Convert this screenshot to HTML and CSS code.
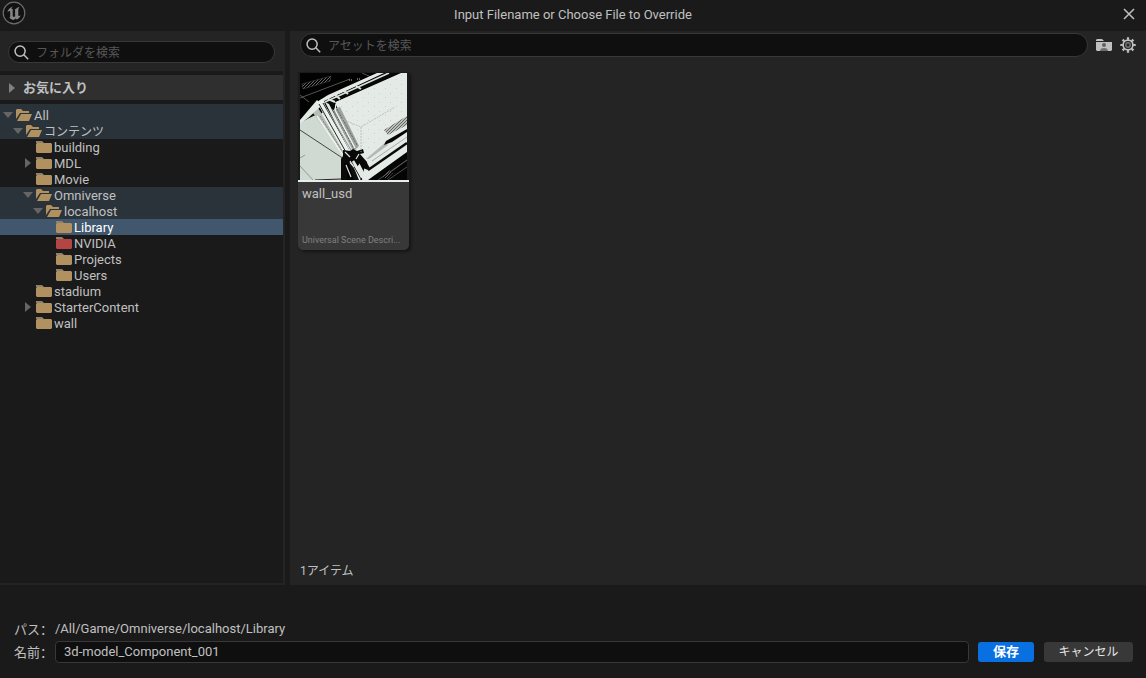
FILE: index.html
```html
<!DOCTYPE html>
<html lang="ja">
<head>
<meta charset="utf-8">
<title>Input Filename or Choose File to Override</title>
<link rel="stylesheet" href="styles.css">
</head>
<body>
<svg class="defs" width="0" height="0" aria-hidden="true">
  <symbol id="folder" viewBox="0 0 16 12"><path fill="#8f816a" d="M0 0h6l2 2H0z"/><path fill="currentColor" d="M1 2h14l1 1v8l-1 1H1l-1-1V3z"/></symbol>
  <symbol id="folder-open" viewBox="0 0 16 12"><path fill="currentColor" d="M0 1l1-1h4l2 2h6v2H4L0 10zM5 5h11l-3 7H1z"/></symbol>
  <symbol id="down" viewBox="0 0 10 10"><path fill="currentColor" d="M0 2h10L5 8z"/></symbol>
  <symbol id="right" viewBox="0 0 10 10"><path fill="currentColor" d="M2 0l6 5-6 5z"/></symbol>
  <symbol id="search" viewBox="0 0 16 16"><g fill="none" stroke="currentColor" stroke-width="1.6"><circle cx="6.5" cy="6.5" r="5.4"/><path d="M10.5 10.5l4.6 4.6"/></g></symbol>
</svg>

<header class="titlebar">
  <svg class="logo" viewBox="0 0 24 24" aria-hidden="true">
    <circle cx="12" cy="12" r="10.8" fill="#111" stroke="#6c6c6c" stroke-width="1.2"/>
    <path fill="#858585" d="M11 5.500C8 6.500 5.800 8.800 5.300 11.600c.8-1 1.600-1.500 2.200-1.500.5 0 .7.3.7.9v4.600c0 .7-.3 1-1 .9 1.200 1.500 2.800 2.300 4.700 2.400l1.400-1.300 1.500 1c2-1.100 3.300-2.600 4-4.700-.8.8-1.400 1.200-1.900 1.200-.4 0-.6-.3-.6-.8V8.700c0-1.100.5-2.100 1.400-3-1.800.5-3.200 1.300-4.100 2.500-.3-.3-.7-.5-1.200-.5.5.5.7 1 .7 1.600v5.900l-1 .8c-.9-.1-1.400-.6-1.400-1.500V8.300c0-.4-.3-.6-.7-.6-.3 0-.6.1-.9.3.4-1 1-1.800 1.900-2.500z"/>
  </svg>
  <h1>Input Filename or Choose File to Override</h1>
  <button class="icon-button close" aria-label="Close"><svg width="12" height="12" viewBox="0 0 12 12"><path d="M1 1l10 10M11 1L1 11" stroke="currentColor" stroke-width="1.5"/></svg></button>
</header>

<main>
  <aside class="sources">
    <div class="source-search">
      <label class="search">
        <svg class="search-icon"><use href="#search"/></svg>
        <input type="text" placeholder="フォルダを検索" aria-label="フォルダを検索">
      </label>
    </div>
    <button class="favorites"><svg class="arrow"><use href="#right"/></svg>お気に入り</button>
    <ul class="tree">
      <li><button class="row path l0"><svg class="arrow"><use href="#down"/></svg><svg class="folder"><use href="#folder-open"/></svg>All</button></li>
      <li><button class="row path ja l1"><svg class="arrow"><use href="#down"/></svg><svg class="folder"><use href="#folder-open"/></svg>コンテンツ</button></li>
      <li><button class="row l2"><span class="arrow"></span><svg class="folder"><use href="#folder"/></svg>building</button></li>
      <li><button class="row l2"><svg class="arrow"><use href="#right"/></svg><svg class="folder"><use href="#folder"/></svg>MDL</button></li>
      <li><button class="row l2"><span class="arrow"></span><svg class="folder"><use href="#folder"/></svg>Movie</button></li>
      <li><button class="row path l2"><svg class="arrow"><use href="#down"/></svg><svg class="folder"><use href="#folder-open"/></svg>Omniverse</button></li>
      <li><button class="row path l3"><svg class="arrow"><use href="#down"/></svg><svg class="folder"><use href="#folder-open"/></svg>localhost</button></li>
      <li><button class="row selected l4"><span class="arrow"></span><svg class="folder"><use href="#folder"/></svg>Library</button></li>
      <li><button class="row l4"><span class="arrow"></span><svg class="folder red"><use href="#folder"/></svg>NVIDIA</button></li>
      <li><button class="row l4"><span class="arrow"></span><svg class="folder"><use href="#folder"/></svg>Projects</button></li>
      <li><button class="row l4"><span class="arrow"></span><svg class="folder"><use href="#folder"/></svg>Users</button></li>
      <li><button class="row l2"><span class="arrow"></span><svg class="folder"><use href="#folder"/></svg>stadium</button></li>
      <li><button class="row l2"><svg class="arrow"><use href="#right"/></svg><svg class="folder"><use href="#folder"/></svg>StarterContent</button></li>
      <li><button class="row l2"><span class="arrow"></span><svg class="folder"><use href="#folder"/></svg>wall</button></li>
    </ul>
  </aside>

  <section class="assets">
    <div class="asset-bar">
      <label class="search tall">
        <svg class="search-icon"><use href="#search"/></svg>
        <input type="text" placeholder="アセットを検索" aria-label="アセットを検索">
      </label>
      <button class="icon-button" aria-label="Developer folders"><svg width="16" height="16" viewBox="0 0 16 16"><path fill="#c0c0c0" d="M0 3l1-1h5l2 2H0zM0 5h16v8l-1 1H1l-1-1z"/><circle cx="8" cy="8" r="2" fill="#606060"/><path fill="#707070" d="M4 14c0-2 1.500-3 4-3s4 1 4 3z"/></svg></button>
      <button class="icon-button" aria-label="Settings"><svg width="16" height="16" viewBox="0 0 16 16"><g fill="none" stroke="#c0c0c0"><circle cx="8" cy="8" r="4.900" stroke-width="1.700"/><circle cx="8" cy="8" r="2.200" stroke="#777" stroke-width="1.400"/><path stroke-width="2.200" d="M8 .3v2.500M8 13.200v2.500M.3 8h2.500M13.200 8h2.500M2.600 2.600l1.700 1.700M11.700 11.700l1.700 1.700M13.400 2.600l-1.700 1.700M4.300 11.700l-1.700 1.700"/></g></svg></button>
    </div>
    <div class="grid">
      <article class="card">
        <svg class="thumb" viewBox="0 0 107 107" role="img" aria-label="wall_usd">
          <defs>
            <pattern id="hatch" width="3" height="3" patternUnits="userSpaceOnUse"><path d="M0 0h1v1H0zM2 1h1v1H2zM1 2h1v1H1z" fill="#666"/></pattern>
            <pattern id="specks" width="11" height="9" patternUnits="userSpaceOnUse"><path d="M2 2h1v1H2zM8 6h1v1H8z" fill="#cbd2cc"/></pattern>
          </defs>
          <path d="M0 0h107v107H0z" fill="#020202"/>
          <path d="M2 11L31 3l-1 5L3 16z" fill="url(#hatch)" stroke="#444" stroke-width=".6"/>
          <path d="M0 25L50 6M0 22l9 7M62 0l9 4" stroke="#777" stroke-width=".7"/>
          <path d="M49 7h3M57 6h3" stroke="#888" stroke-width="1.500" stroke-dasharray="1 1"/>
          <path d="M0 50l16-9 28 43-3 2v21H0z" fill="#d0d9d2"/>
          <path d="M0 47l17-20 3 3L5 46l-5 4z" fill="#e4eae6"/>
          <path d="M5 47l10-10 3 4-9 4z" fill="#111"/>
          <path d="M13 40l5-5 34 51-7-2z" fill="#b6beb8"/>
          <path d="M17 43l26 39M22 40l25 42" stroke="#f0f4f1" stroke-width="1.500"/>
          <path d="M20 43l24 38" stroke="#69706b" stroke-width=".8" stroke-dasharray="2 1"/>
          <path d="M35 29L49 23 101 0h6v57L66 89l-11-10z" fill="#e4eae6"/>
          <path d="M38 31L56 23 107 0v50L85 60 66 86 53 72z" fill="url(#specks)"/>
          <path d="M32 36l8-2 19 39-6 6z" fill="#9da39f"/>
          <path d="M34 38l20 38M37 36l20 36" stroke="#626763" stroke-width="1" stroke-dasharray="2 1"/>
          <path d="M36 31l-1 6 20 38" fill="none" stroke="#f2f5f3" stroke-width="1.300"/>
          <path d="M0 49l20-22 8-5L77 0h7L29 26 8 45 0 51z" fill="#e4eae6"/>
          <path d="M24 28L86 0h12L35 29l-1 8-6-2z" fill="#080808"/>
          <path d="M28 26l7 3M35 22l5 4M44 18l4 3M56 13l5 3" stroke="#dce3de" stroke-width="2"/>
          <path d="M25 29L89 0" stroke="#dce3de" stroke-width="1.600"/>
          <path d="M17 29l5-3 41 77-3 4h-2z" fill="#eaf0ec"/>
          <path d="M19 31l42 75M23 30l36 62" stroke="#272727" stroke-width="1"/>
          <path d="M25 29l4 2 39 76h-4z" fill="#e1e8e3"/>
          <path d="M27 36l28 48" stroke="#8c938e" stroke-width="1"/>
          <path d="M0 57l44 29" stroke="#414641" stroke-width="1"/>
          <path d="M0 93l13 14M0 85l5-3" stroke="#929a94" stroke-width="1"/>
          <path d="M15 107l26-1" stroke="#222" stroke-width="1"/>
          <path d="M66 86l20-17 21-11v49H62z" fill="#e4eae6"/>
          <path d="M66 86l20-17 2 3-19 14z" fill="#b2b9b4"/>
          <path d="M86 68l21-12v3L92 69l-8 3z" fill="#050505"/>
          <path d="M68 97l39-27M66 91l3 5" stroke="#0a0a0a" stroke-width="2.500"/>
          <path d="M68 107l39-28v28z" fill="#050505"/>
          <path d="M72 88l35-24" stroke="#a8afaa" stroke-width="1"/>
          <path d="M43 77l7 1 3-2 4 2 6-2 1 4-4 1 7 8 1 8-5-2-3-5-3 4-7-5-2 5-5-6z" fill="#080808"/>
          <path d="M43 83l4 3-3 6 3 6v9h-6V86z" fill="#0a0a0a"/>
          <path d="M48 88l6 7 5 12h-5z" fill="#101010"/>
          <path d="M45 79l5 5M50 88l4 6M59 81l-3 5M46 92l5 12" stroke="#dce3de" stroke-width="1.200"/>
          <path d="M53 88l11 18" stroke="#e4eae6" stroke-width="2.500"/>
          <path d="M42 46l19 8 34-20M61 54v25" fill="none" stroke="#aeb6b0" stroke-width=".8" stroke-dasharray="2 1"/>
          <path d="M84 57l23-14v9L88 62z" fill="#b7bdb9"/>
          <path d="M84 57l23-14v9L88 62z" fill="url(#hatch)"/>
          <path d="M78 107l29-20M88 107l19-13M92 98l15-11" stroke="#606060" stroke-width=".8"/>
          <path d="M82 103l8-6 3 3-6 6z" fill="url(#hatch)"/>
        </svg>
        <div class="info">
          <span class="name">wall_usd</span>
          <span class="type">Universal Scene Descri...</span>
        </div>
      </article>
    </div>
    <p class="status">1アイテム</p>
  </section>
</main>

<form class="footer">
  <span class="label">パス<span class="colon" lang="zh-CN">：</span></span>
  <span class="value">/All/Game/Omniverse/localhost/Library</span>
  <label class="label" for="filename">名前<span class="colon" lang="zh-CN">：</span></label>
  <div class="controls">
    <input id="filename" class="filename" type="text" value="3d-model_Component_001">
    <button type="button" class="button primary">保存</button>
    <button type="button" class="button cancel">キャンセル</button>
  </div>
</form>
</body>
</html>
```
FILE: styles.css
```css
* { box-sizing: border-box; }

body {
  display: flex;
  flex-direction: column;
  min-height: 100vh;
  margin: 0;
  background: #1a1a1a;
  color: #c0c0c0;
  font: 13px/16px Roboto, "Noto Sans CJK JP", sans-serif;
}

button, input {
  margin: 0;
  padding: 0;
  border: 0;
  background: none;
  color: inherit;
  font: inherit;
}

svg { display: block; flex: none; }
.defs { position: absolute; }

.titlebar {
  display: grid;
  grid-template-columns: 40px 1fr 40px;
  align-items: center;
  height: 31px;
}
.logo { width: 24px; height: 24px; margin: 0 0 6px 2px; }
h1 {
  margin: 0 0 2px;
  font-size: 13px;
  font-weight: 400;
  text-align: center;
}
.icon-button { display: flex; align-items: center; justify-content: center; }
.close { justify-self: end; margin: 0 11px 3px 0; }

main { display: flex; flex: 1; gap: 5px; }

.sources {
  display: flex;
  flex-direction: column;
  flex: none;
  width: 285px;
  border: solid #242424;
  border-width: 0 2px 2px 0;
}
.source-search { padding: 10px 8px 8px; background: #242424; }

.search {
  display: flex;
  align-items: center;
  flex: 1;
  gap: 7px;
  height: 22px;
  padding: 0 5px;
  border: 1px solid #383838;
  border-radius: 12px;
  background: #0f0f0f;
}
.search.tall { height: 24px; }
.search-icon { width: 15px; height: 15px; }
.search input { flex: 1; min-width: 0; padding-top: 2px; font-size: 12px; outline: none; }
.search input::placeholder { color: #575757; opacity: 1; }

.favorites {
  display: flex;
  align-items: center;
  gap: 6px;
  height: 25px;
  margin: 4px 0 4px;
  padding-left: 7px;
  background: #2f2f2f;
  font-weight: 700;
}
.arrow { flex: none; width: 10px; height: 10px; color: #808080; }

.tree { margin: 0; padding: 0; list-style: none; }
.row {
  display: flex;
  align-items: flex-start;
  width: 100%;
  height: 16px;
  line-height: 18px;
  text-align: left;
}
.row .arrow { align-self: center; margin-right: 3px; color: #656565; }
.folder { align-self: center; width: 16px; height: 12px; margin-right: 2px; color: #b29160; }
.row .red { color: #b54545; }
.path { background: #2b333a; }
.selected { background: #40576e; color: #fff; }
.ja { font-size: 12px; }
.l0 { height: 19px; padding: 3px 0 0 3px; }
.l1 { padding-left: 13px; }
.l2 { padding-left: 23px; }
.l3 { padding-left: 33px; }
.l4 { padding-left: 43px; }

.assets {
  display: flex;
  flex-direction: column;
  flex: 1;
  min-width: 0;
  background: #242424;
}
.asset-bar { display: flex; align-items: center; gap: 8px; padding: 2px 10px; }
.grid { display: flex; flex-wrap: wrap; flex: 1; align-items: flex-start; padding: 13px 8px; }
.card {
  width: 111px;
  border-radius: 0 0 5px 5px;
  background: #1b1b1b;
  box-shadow: 2px 2px 3px #151515;
}
.thumb { width: 107px; height: 108px; margin: 0 2px; padding-top: 1px; }
.info {
  display: flex;
  flex-direction: column;
  justify-content: space-between;
  height: 70px;
  padding: 4px 4px 4px;
  border-top: 2px solid #e8eeea;
  border-radius: 0 0 5px 5px;
  background: #383838;
}
.type {
  color: #808080;
  font-size: 9px;
  line-height: 12px;
  white-space: nowrap;
}
.status { margin: 0; padding: 0 10px 6px; font-size: 12px; }

.footer {
  display: grid;
  grid-template-columns: 41px 1fr;
  grid-auto-rows: 22px;
  row-gap: 1px;
  align-items: center;
  padding: 33px 13px 15px 14px;
}
.label { white-space: nowrap; }
.colon { font-family: "Noto Sans CJK SC", sans-serif; }
.controls { display: flex; align-items: center; }
.filename {
  flex: 1;
  min-width: 0;
  height: 22px;
  margin-right: 9px;
  padding: 0 8px 2px;
  border: 1px solid #383838;
  border-radius: 4px;
  background: #0f0f0f;
}
.button { height: 20px; border-radius: 3px; background: #383838; color: #e4e4e4; }
.primary { width: 56px; margin-right: 10px; background: #0870e0; color: #fff; font-weight: 700; }
.cancel { width: 89px; font-size: 12px; }
```
